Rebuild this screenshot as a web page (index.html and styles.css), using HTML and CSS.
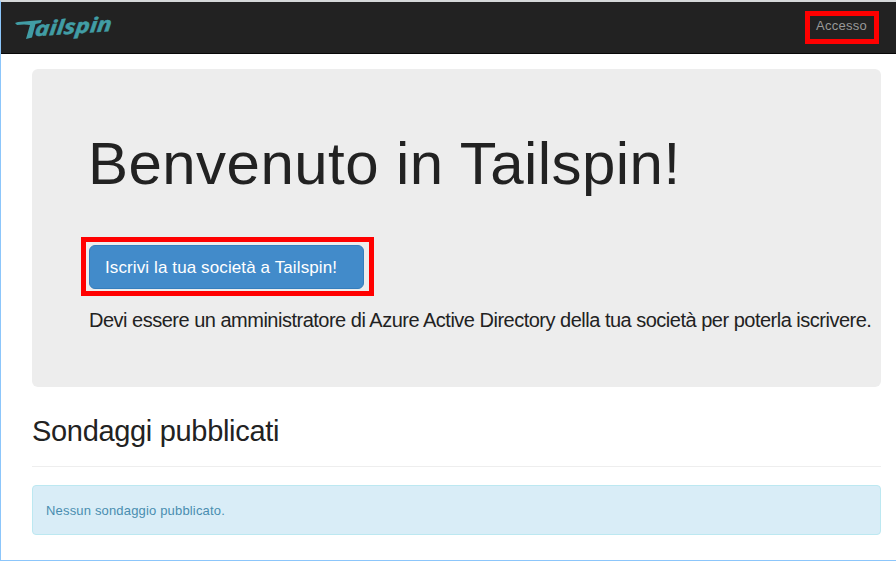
FILE: index.html
```html
<!DOCTYPE html>
<html lang="it">
<head>
<meta charset="utf-8">
<title>Tailspin</title>
<link rel="stylesheet" href="styles.css">
</head>
<body>
<div class="window">
  <header class="navbar">
    <a class="brand" aria-label="Tailspin">
      <svg width="110" height="40" viewBox="0 0 110 40">
        <path d="M0 12 L3 11 L27 9 L25.500 12 L20.500 13 L17 26.500 L11 28 L15 14 L9 13.500 L2 14 Z"/>
        <text transform="translate(19.500 25.300) rotate(-4) skewX(-9)" textLength="77" lengthAdjust="spacingAndGlyphs">ailspin</text>
      </svg>
    </a>
    <a class="login highlight">Accesso</a>
  </header>
  <main>
    <section class="jumbotron">
      <h1>Benvenuto in Tailspin!</h1>
      <div class="signup highlight"><a class="button">Iscrivi la tua società a Tailspin!</a></div>
      <p class="note">Devi essere un amministratore di Azure Active Directory della tua società per poterla iscrivere.</p>
    </section>
    <h2>Sondaggi pubblicati</h2>
    <div class="alert">Nessun sondaggio pubblicato.</div>
  </main>
</div>
</body>
</html>
```
FILE: styles.css
```css
* { box-sizing: border-box; }
body {
  margin: 0;
  background: #fff;
  color: #222;
  font-family: "Liberation Sans", Arial, sans-serif;
}
.window {
  height: 561px;
  border-top: 2px solid #d5d8d9;
  border-left: 1px solid #8cc6fb;
  border-bottom: 1px solid #8cc6fb;
}
.navbar {
  display: flex;
  justify-content: space-between;
  align-items: flex-start;
  height: 52px;
  padding: 9px 17px 0 14px;
  background: #222;
  border-bottom: 1px solid #080808;
}
.brand svg {
  display: block;
  overflow: visible;
  fill: #419da5;
}
.brand text {
  font: italic bold 20px "Open Sans", sans-serif;
  stroke: #419da5;
  stroke-width: .5px;
}
.highlight { border: 5px solid #f00; }
.login {
  width: 74px;
  height: 33px;
  padding-left: 6px;
  color: #999;
  font-size: 13px;
  line-height: 20px;
  letter-spacing: .25px;
  white-space: nowrap;
}
main { padding: 15px 15px 0 31px; }
.jumbotron {
  height: 318px;
  padding: 61px 0 0 49px;
  background: #ededed;
  border-radius: 6px;
}
h1 {
  margin: 0 0 0 7px;
  font-size: 60px;
  font-weight: 400;
  line-height: 68px;
  letter-spacing: .45px;
  white-space: nowrap;
}
.signup {
  width: 293px;
  height: 59px;
  margin-top: 39px;
  padding: 3px 5px 2px 3px;
}
.button {
  display: block;
  width: 275px;
  height: 44px;
  padding-left: 15px;
  background: #428bca;
  border: 1px solid #357ebd;
  border-radius: 6px;
  color: #fff;
  font-size: 17px;
  line-height: 43px;
  letter-spacing: .11px;
  white-space: nowrap;
}
.note {
  margin: 12px 0 0 8px;
  font-size: 20px;
  line-height: 24px;
  letter-spacing: -.5px;
  white-space: nowrap;
}
h2 {
  height: 80px;
  margin: 0 0 18px;
  padding-top: 26px;
  border-bottom: 1px solid #eee;
  font-size: 29px;
  font-weight: 400;
  line-height: 36px;
  letter-spacing: -.32px;
}
.alert {
  height: 50px;
  padding-left: 13px;
  background: #d9edf7;
  border: 1px solid #bce8f1;
  border-radius: 4px;
  color: #498db0;
  font-size: 13px;
  line-height: 49px;
  letter-spacing: .17px;
}
```
